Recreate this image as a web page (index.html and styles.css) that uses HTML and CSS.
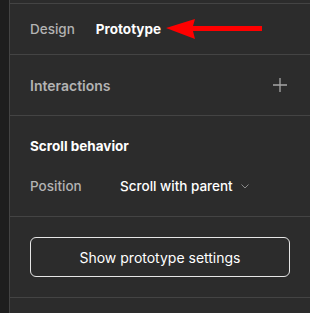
FILE: index.html
```html
<!doctype html>
<html lang="en">
  <head>
    <meta charset="UTF-8" />
    <meta name="viewport" content="width=device-width, initial-scale=1.0" />
    <title>Prototype Panel</title>
    <link rel="stylesheet" href="styles.css">
  </head>
  <body>
    <div class="rail"></div>
    <div class="panel">
      <div class="section tabs">
        <span class="tab">Design</span>
        <span class="tab active">Prototype</span>
        <svg class="arrow" width="100" height="22" viewBox="0 0 100 22">
          <polygon points="0,10 29,1 27,8 96,8 96,13 27,13 29,21" fill="#ff0000" />
        </svg>
      </div>
      <div class="section interactions">
        <span class="label">Interactions</span>
        <svg class="plus" width="14" height="14" viewBox="0 0 14 14">
          <path d="M7 0V14M0 7H14" stroke="#a6a6a6" stroke-width="1.3" />
        </svg>
      </div>
      <div class="section scroll">
        <div class="title">Scroll behavior</div>
        <div class="row">
          <span class="row-label">Position</span>
          <span class="row-value">Scroll with parent</span>
          <svg class="chevron" width="8" height="5" viewBox="0 0 8 5">
            <path d="M0.5 0.5L4 4L7.5 0.5" stroke="#8a8a8a" stroke-width="1" fill="none" />
          </svg>
        </div>
      </div>
      <div class="section settings">
        <button class="settings-button">Show prototype settings</button>
      </div>
      <div class="section rest"></div>
    </div>
  </body>
</html>
```

FILE: styles.css
```css
html,
body {
  height: 100%;
}
body {
  margin: 0;
  display: flex;
  background-color: #2c2c2c;
  font-family: Inter, "Noto Sans", sans-serif;
  font-size: 13.5px;
  color: #ffffff;
}

.rail {
  width: 9px;
  background-color: #1e1e1e;
  border-right: 1px solid #444;
}
.panel {
  flex: 1;
  padding-top: 3px;
}
.section {
  border-top: 1px solid #444;
  padding: 0 23px 0 20px;
  box-sizing: border-box;
}

.tabs {
  height: 51px;
  display: flex;
  align-items: center;
  gap: 21px;
  padding-bottom: 1px;
}
.tab {
  color: #b3b3b3;
  font-weight: 500;
}
.tab.active {
  color: #ffffff;
  font-weight: 700;
}
.arrow {
  margin-left: -16px;
  margin-top: 1px;
}

.interactions {
  height: 61px;
  display: flex;
  align-items: center;
  justify-content: space-between;
}
.label {
  color: #b3b3b3;
  font-size: 14px;
  font-weight: 600;
}

.scroll {
  height: 101px;
  padding-top: 20px;
}
.title {
  font-weight: 700;
  line-height: 20px;
}
.row {
  display: flex;
  align-items: center;
  margin-top: 20px;
  line-height: 20px;
}
.row-label {
  color: #b3b3b3;
  width: 90px;
  font-weight: 500;
}
.row-value {
  color: #ffffff;
  font-weight: 500;
}
.chevron {
  margin-left: 8px;
  margin-top: 1px;
}

.settings {
  height: 81px;
  padding-top: 20px;
  padding-right: 20px;
}
.settings-button {
  width: 100%;
  height: 40px;
  background-color: transparent;
  border: 1px solid #e6e6e6;
  border-radius: 6px;
  color: #ffffff;
  font-family: inherit;
  font-size: 14px;
  font-weight: 400;
  cursor: pointer;
}
```
